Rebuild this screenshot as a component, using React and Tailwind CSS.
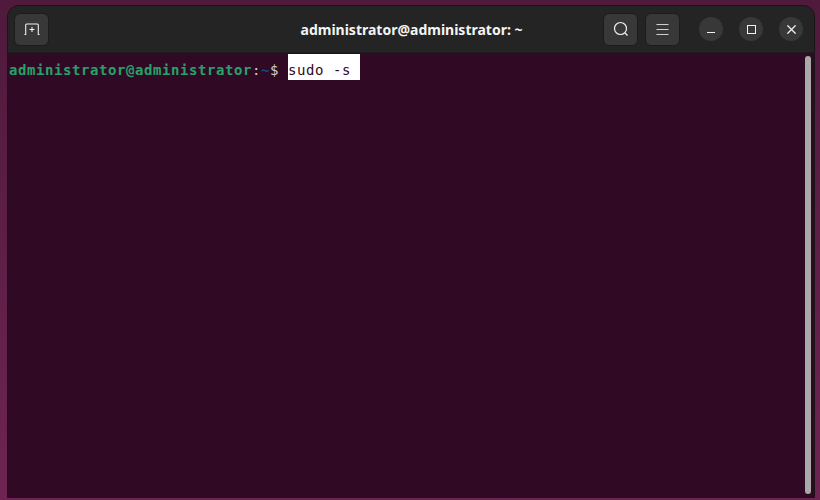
import { Menu, X } from 'lucide-react';

function HeaderButton({ children }) {
  return (
    <button className="w-[35px] h-[33px] flex items-center justify-center rounded-[6px] bg-[#383838] border border-[#1c1c1c] text-[#f0f0f0]">
      {children}
    </button>
  );
}

function WindowButton({ children }) {
  return (
    <button className="w-[24px] h-[24px] flex items-center justify-center rounded-full bg-[#383838] text-[#f0f0f0]">
      {children}
    </button>
  );
}

export default function App() {
  return (
    <div className="w-[820px] h-[500px] overflow-hidden bg-gradient-to-b from-[#4f1a3c] to-[#6e2452] pt-[5px] pl-[7px] pr-[5px]">
      <div className="h-[493px] flex flex-col rounded-t-[12px] overflow-hidden border border-[#1a1418] bg-[#300a24]">
        <header className="h-[47px] shrink-0 flex items-center bg-[#242424] border-b border-[#1c1c1c] pl-[6px] pr-[11px]">
          <div className="flex-1 basis-0 flex">
            <HeaderButton>
              <svg width="16" height="13" viewBox="0 0 16 13" fill="none" stroke="currentColor" strokeWidth="1.1">
                <path d="M0.5 11.5 h1.2 V2 q0 -1 1 -1 h10.6 q1 0 1 1 V11.5 h1.2" />
                <path d="M8 4 v5 M5.5 6.5 h5" />
              </svg>
            </HeaderButton>
          </div>
          <h1 className="ml-[6px] font-['Noto_Sans',sans-serif] font-bold text-[14px] text-[#f4f4f4]">
            administrator@administrator: ~
          </h1>
          <div className="flex-1 basis-0 flex items-center justify-end">
            <div className="flex gap-[7px] mr-[19px]">
              <HeaderButton>
                <svg width="16" height="16" viewBox="0 0 16 16" fill="none" stroke="currentColor" strokeWidth="1.2">
                  <circle cx="7.5" cy="7.5" r="6" />
                  <path d="M12 12 l2.5 2.5" />
                </svg>
              </HeaderButton>
              <HeaderButton>
                <Menu size={17} strokeWidth={1.2} />
              </HeaderButton>
            </div>
            <div className="flex gap-[16px]">
              <WindowButton>
                <span className="block w-[8px] h-[1px] bg-[#f0f0f0] mt-[6px]" />
              </WindowButton>
              <WindowButton>
                <span className="block w-[9px] h-[9px] border border-[#f0f0f0]" />
              </WindowButton>
              <WindowButton>
                <X size={15} strokeWidth={2} />
              </WindowButton>
            </div>
          </div>
        </header>
        <main className="relative flex-1 pl-[1px] pt-[1px] font-['DejaVu_Sans_Mono',monospace] text-[14px] tracking-[0.57px] leading-[20px]">
          <div className="flex whitespace-pre [&>span]:pt-[6px]">
            <span className="font-bold text-[#26a269]">administrator@administrator</span>
            <span className="text-[#d0cfcc]">:</span>
            <span className="font-bold text-[#12488b]">~</span>
            <span className="text-[#d0cfcc]">$ </span>
            <span className="bg-white text-[#300a24]">sudo -s </span>
          </div>
          <div className="absolute right-[3px] top-[3px] bottom-[3px] w-[6px] rounded-full bg-[#a9a9a9]" />
        </main>
      </div>
    </div>
  );
}
